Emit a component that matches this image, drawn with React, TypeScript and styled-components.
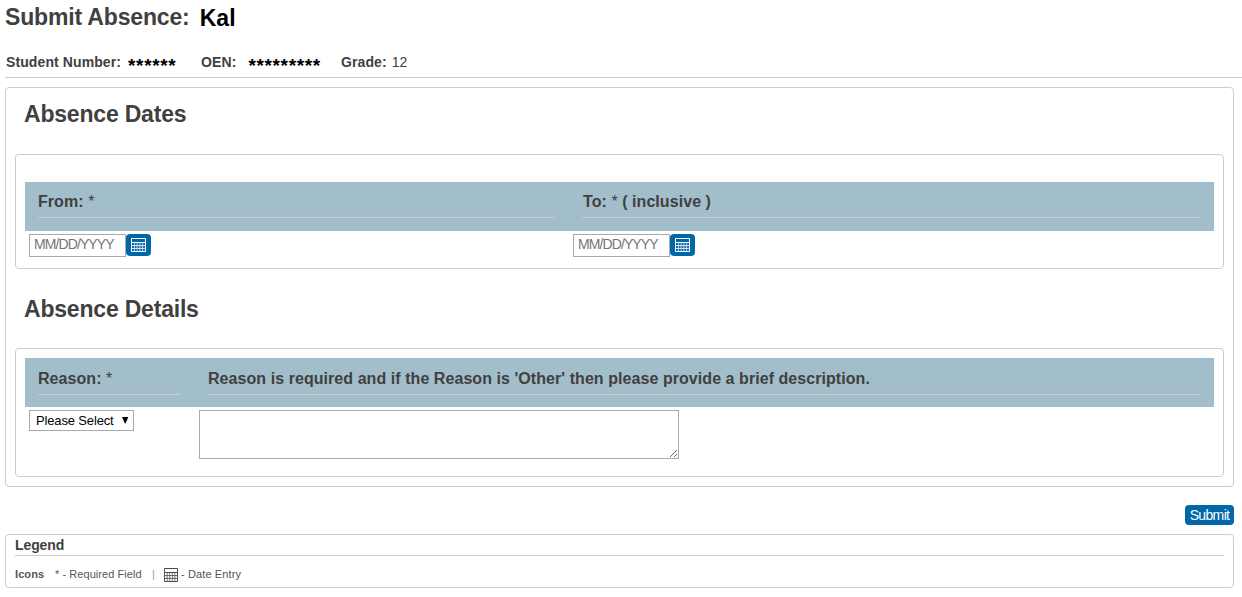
import React, { useState } from 'react';
import styled, { createGlobalStyle } from 'styled-components';

const GlobalStyle = createGlobalStyle`
  body {
    margin: 0;
    background: #fff;
    color: #404040;
    font-family: 'Liberation Sans', Arial, sans-serif;
    overflow: hidden;
  }
  * {
    box-sizing: border-box;
  }
`;

function CalendarIcon({ color, width = 15 }: { color: string; width?: number }) {
  return (
    <svg
      width={width}
      height="14"
      viewBox="0 0 15 14"
      fill="none"
      stroke={color}
      preserveAspectRatio="none"
    >
      <path d="M3.4 5v8M6.1 5v8M8.9 5v8M11.6 5v8" strokeWidth="0.8" strokeOpacity="0.85" />
      <path d="M1 7.6h13M1 10.4h13" strokeOpacity="0.85" />
      <path d="M0.5 0.5h14v13h-14z" />
      <path d="M1 4.5h13" />
    </svg>
  );
}

function DateField({ label }: { label: string }) {
  const [value, setValue] = useState('');
  return (
    <DateWrap>
      <DateInput
        aria-label={label}
        placeholder="MM/DD/YYYY"
        value={value}
        onChange={(e) => setValue(e.target.value)}
      />
      <DateButton type="button" aria-label={`${label} date`}>
        <CalendarIcon color="#fff" />
      </DateButton>
    </DateWrap>
  );
}

function App(): JSX.Element {
  const [description, setDescription] = useState('');

  return (
    <>
      <GlobalStyle />
      <Page>
        <PageTitle>
          <span>Submit Absence:</span>
          <StudentName>Kal</StudentName>
        </PageTitle>
        <StudentInfo>
          <InfoItem $width={195}>
            <b>Student Number:</b>
            <Masked>******</Masked>
          </InfoItem>
          <InfoItem $width={140} $gap={12}>
            <b>OEN:</b>
            <Masked>*********</Masked>
          </InfoItem>
          <InfoItem $gap={5}>
            <b>Grade:</b>
            <span>12</span>
          </InfoItem>
        </StudentInfo>

        <Panel>
          <SectionTitle>Absence Dates</SectionTitle>
          <Fieldset $top={27} $height={115}>
            <HeaderRow $first={544}>
              <HeaderCell>
                From: <Required>*</Required>
              </HeaderCell>
              <HeaderCell $indent={1}>
                To: <Required>*</Required> ( inclusive )
              </HeaderCell>
            </HeaderRow>
            <FieldRow $first={544}>
              <DateField label="From" />
              <DateField label="To" />
            </FieldRow>
          </Fieldset>

          <SectionTitle $second>Absence Details</SectionTitle>
          <Fieldset $top={9} $height={129}>
            <HeaderRow $first={170}>
              <HeaderCell $drop={1}>
                Reason: <Required>*</Required>
              </HeaderCell>
              <HeaderCell $drop={1}>
                Reason is required and if the Reason is 'Other' then please provide a brief
                description.
              </HeaderCell>
            </HeaderRow>
            <FieldRow $first={170}>
              <ReasonSelect type="button">
                <span>Please Select</span>
                <svg width="8" height="7" viewBox="0 0 8 7">
                  <path d="M1 0h6.4L4.2 7z" fill="#000" />
                </svg>
              </ReasonSelect>
              <Description value={description} onChange={(e) => setDescription(e.target.value)} />
            </FieldRow>
          </Fieldset>
        </Panel>

        <Actions>
          <SubmitButton type="submit">Submit</SubmitButton>
        </Actions>

        <Legend>
          <LegendTitle>Legend</LegendTitle>
          <LegendRow>
            <LegendLabel>Icons</LegendLabel>
            <RequiredKey>* - Required Field</RequiredKey>
            <Divider>|</Divider>
            <CalendarIcon color="#444" width={14} />
            <DateKey>- Date Entry</DateKey>
          </LegendRow>
        </Legend>
      </Page>
    </>
  );
}

const Page = styled.div`
  width: 1242px;
  height: 597px;
  padding-left: 5px;
`;
const PageTitle = styled.h1`
  display: flex;
  gap: 10px;
  height: 34px;
  margin: 0;
  padding-top: 3px;
  font-size: 23px;
  letter-spacing: -0.16px;
  line-height: 28px;
`;
const StudentName = styled.span`
  color: #000;
  padding-top: 1px;
  letter-spacing: 0.1px;
`;
const StudentInfo = styled.div`
  display: flex;
  height: 44px;
  padding: 20px 0 0 1px;
  border-bottom: 1px solid #ccc;
  font-size: 14px;
  letter-spacing: 0.1px;
  line-height: 16px;
`;
const InfoItem = styled.div<{ $width?: number; $gap?: number }>`
  display: flex;
  gap: ${(p) => p.$gap ?? 7}px;
  width: ${(p) => (p.$width ? `${p.$width}px` : 'auto')};
`;
const Masked = styled.b`
  color: #000;
  font-size: 19px;
  letter-spacing: 0.65px;
  line-height: 23px;
`;
const Panel = styled.main`
  width: 1229px;
  height: 400px;
  margin-top: 9px;
  padding: 0 9px;
  border: 1px solid #ccc;
  border-radius: 4px;
`;
const SectionTitle = styled.h2<{ $second?: boolean }>`
  height: ${(p) => (p.$second ? 79 : 66)}px;
  margin: 0;
  padding: ${(p) => (p.$second ? 26 : 12)}px 0 0 9px;
  font-size: 23px;
  letter-spacing: -0.2px;
  line-height: 28px;
`;
const Fieldset = styled.section<{ $top: number; $height: number }>`
  height: ${(p) => p.$height}px;
  padding: ${(p) => p.$top}px 9px 0;
  border: 1px solid #ccc;
  border-radius: 4px;
`;
const HeaderRow = styled.div<{ $first: number }>`
  display: grid;
  grid-template-columns: ${(p) => p.$first}px 1fr;
  height: 49px;
  background: #a3becb;
`;
const HeaderCell = styled.div<{ $drop?: number; $indent?: number }>`
  height: ${(p) => 36 + (p.$drop ?? 0)}px;
  margin: 0 14px 0 13px;
  padding: ${(p) => 10 + (p.$drop ?? 0)}px 0 0 ${(p) => p.$indent ?? 0}px;
  border-bottom: 1px solid #ccc;
  font-size: 16px;
  font-weight: bold;
  letter-spacing: 0.06px;
  line-height: 20px;
  white-space: nowrap;
`;
const Required = styled.span`
  font-weight: normal;
`;
const FieldRow = styled.div<{ $first: number }>`
  display: grid;
  grid-template-columns: ${(p) => p.$first}px 1fr;
  align-items: start;
  padding: 3px 0 0 4px;
`;
const DateWrap = styled.div`
  display: flex;
`;
const DateInput = styled.input`
  width: 97px;
  height: 23px;
  padding: 0 4px 3px;
  border: 1px solid #a9a9a9;
  font-family: inherit;
  font-size: 14px;
  letter-spacing: -0.9px;
  &::placeholder {
    color: #757575;
  }
`;
const DateButton = styled.button`
  display: flex;
  justify-content: center;
  align-items: center;
  width: 25px;
  height: 22px;
  padding: 0;
  border: 0;
  border-radius: 4px;
  background: #0067a8;
`;
const ReasonSelect = styled.button`
  display: flex;
  justify-content: space-between;
  align-items: center;
  width: 105px;
  height: 21px;
  padding: 0 4px 0 6px;
  border: 1px solid #a9a9a9;
  background: #fff;
  color: #000;
  font-family: inherit;
  font-size: 13px;
  letter-spacing: -0.15px;
`;
const Description = styled.textarea`
  width: 480px;
  height: 49px;
  border: 1px solid #a9a9a9;
  resize: both;
`;
const Actions = styled.div`
  display: flex;
  justify-content: flex-end;
  width: 1229px;
  padding-top: 18px;
`;
const SubmitButton = styled.button`
  width: 49px;
  height: 20px;
  padding: 0;
  border: 0;
  border-radius: 4px;
  background: #0067a8;
  color: #fff;
  font-family: inherit;
  font-size: 14px;
  letter-spacing: -0.65px;
  line-height: 20px;
`;
const Legend = styled.footer`
  width: 1229px;
  height: 54px;
  margin-top: 9px;
  padding: 0 9px;
  border: 1px solid #ccc;
  border-radius: 4px;
`;
const LegendTitle = styled.div`
  height: 21px;
  border-bottom: 1px solid #ccc;
  font-size: 14px;
  font-weight: bold;
  letter-spacing: -0.1px;
  line-height: 20px;
`;
const LegendRow = styled.div`
  display: flex;
  height: 31px;
  padding-top: 12px;
  color: #555;
  font-size: 11px;
  line-height: 13px;
  svg {
    margin-left: 9px;
  }
`;
const LegendLabel = styled.b`
  width: 40px;
  letter-spacing: 0.1px;
`;
const RequiredKey = styled.span`
  width: 97px;
  letter-spacing: 0.06px;
`;
const Divider = styled.span`
  width: 3px;
  color: #999;
`;
const DateKey = styled.span`
  margin-left: 3px;
  letter-spacing: 0.12px;
`;

export default App;
